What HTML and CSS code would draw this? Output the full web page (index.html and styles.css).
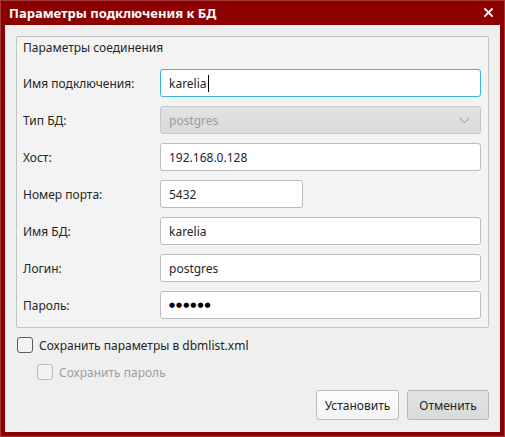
FILE: index.html
```html
<!DOCTYPE html>
<html lang="ru">
<head>
<meta charset="utf-8">
<title>Параметры подключения к БД</title>
<link rel="stylesheet" href="styles.css">
</head>
<body>
<div class="window">
  <div class="titlebar">
    <span class="title">Параметры подключения к БД</span>
    <svg class="close" width="9" height="9" viewBox="0 0 9 9"><path d="M1 1L8 8M8 1L1 8" stroke="#fff" stroke-width="1.8" stroke-linecap="square"/></svg>
  </div>
  <div class="content">
    <div class="group">
      <div class="group-title">Параметры соединения</div>
      <div class="form">
        <div class="label">Имя подключения:</div>
        <div class="field focus"><span>karelia</span><span class="caret"></span></div>

        <div class="label">Тип БД:</div>
        <div class="field combo"><span>postgres</span>
          <svg class="chev" width="11" height="7" viewBox="0 0 11 7"><path d="M0.5 0.8L5.5 5.8L10.5 0.8" fill="none" stroke="#8c8c8c" stroke-width="1"/></svg>
        </div>

        <div class="label">Хост:</div>
        <div class="field"><span>192.168.0.128</span></div>

        <div class="label">Номер порта:</div>
        <div class="field short"><span>5432</span></div>

        <div class="label">Имя БД:</div>
        <div class="field"><span>karelia</span></div>

        <div class="label">Логин:</div>
        <div class="field"><span>postgres</span></div>

        <div class="label">Пароль:</div>
        <div class="field"><span class="dots">●●●●●●</span></div>
      </div>
    </div>

    <div class="check-row">
      <span class="box"></span><span class="check-label">Сохранить параметры в dbmlist.xml</span>
    </div>
    <div class="check-row sub disabled">
      <span class="box"></span><span class="check-label">Сохранить пароль</span>
    </div>

    <div class="buttons">
      <div class="btn">Установить</div>
      <div class="btn alt">Отменить</div>
    </div>
  </div>
</div>
</body>
</html>
```

FILE: styles.css
```css
html, body {
  margin: 0;
  padding: 0;
  background: #8b0000;
}
body {
  font-family: "Noto Sans", "Open Sans", sans-serif;
  font-size: 12px;
  color: #232627;
}
.window {
  width: 505px;
  height: 437px;
  box-sizing: border-box;
  border: 1px solid #a63a3a;
  background: #8b0000;
  display: flex;
  flex-direction: column;
  padding: 0 4px 4px 4px;
}
.titlebar {
  height: 24px;
  display: flex;
  align-items: center;
  justify-content: space-between;
  padding: 0 7px 0 4px;
}
.title {
  color: #fff;
  font-weight: bold;
  font-size: 13px;
  margin-top: -1px;
}
.close {
  display: block;
  margin-top: -2px;
}
.content {
  flex: 1;
  background: #efefef;
  padding: 11px 11px 12px 11px;
  display: flex;
  flex-direction: column;
}
.group {
  border: 1px solid #c4c4c4;
  border-radius: 2px;
  background: #f3f3f3;
  padding: 2px 7px 7px 6px;
  height: 292px;
  box-sizing: border-box;
}
.group-title {
  line-height: 18px;
  margin-bottom: 12px;
}
.form {
  display: grid;
  grid-template-columns: 137px 1fr;
  row-gap: 9px;
  align-items: center;
}
.field {
  height: 28px;
  box-sizing: border-box;
  border: 1px solid #bcbcbc;
  border-radius: 3px;
  background: #fff;
  padding: 0 8px;
  display: flex;
  align-items: center;
  position: relative;
}
.field.focus {
  border-color: #3daee9;
}
.caret {
  display: inline-block;
  width: 1px;
  height: 17px;
  background: #000;
  margin-left: 1px;
}
.field.short {
  width: 143px;
}
.field.combo {
  background: linear-gradient(#e2e3e5, #d9dadc);
  border-color: #c6c7c9;
  color: #9b9c9e;
  justify-content: space-between;
}
.chev {
  display: block;
  margin-right: 2px;
}
.dots {
  font-family: "DejaVu Sans", sans-serif;
  font-size: 7px;
  letter-spacing: 1px;
  color: #000;
}
.check-row {
  display: flex;
  align-items: center;
  margin-top: 9px;
  margin-left: 1px;
  height: 16px;
}
.check-row .box {
  width: 16px;
  height: 16px;
  box-sizing: border-box;
  border: 1px solid #5a5b5c;
  border-radius: 3px;
  background: #f2f2f2;
}
.check-label {
  margin-left: 6px;
}
.check-row.sub {
  margin-left: 21px;
  margin-top: 11px;
}
.check-row.disabled .box {
  border-color: #b9b9b9;
}
.check-row.disabled .check-label {
  color: #9d9e9f;
}
.buttons {
  margin-top: auto;
  display: flex;
  justify-content: flex-end;
  gap: 8px;
}
.btn {
  height: 30px;
  box-sizing: border-box;
  border: 1px solid #bcbcbc;
  border-radius: 3px;
  background: linear-gradient(#fcfcfc, #f3f3f3);
  display: flex;
  align-items: center;
  justify-content: center;
  width: 83px;
}
.btn.alt {
  width: 82px;
  background: linear-gradient(#e1e2e4, #d9dadc);
  border-color: #b5b6b8;
}
```
